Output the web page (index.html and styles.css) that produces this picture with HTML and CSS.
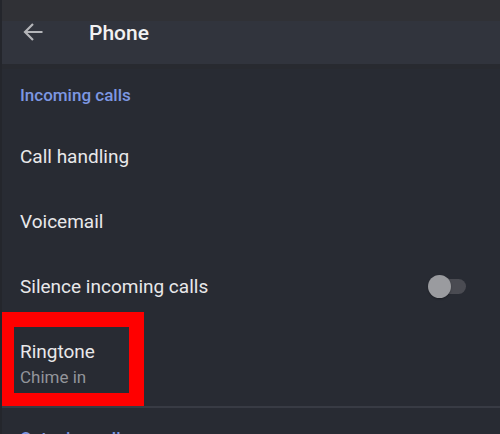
FILE: index.html
```html
<!DOCTYPE html>
<html>
<head>
<meta charset="utf-8">
<link rel="stylesheet" href="styles.css">
</head>
<body>
<div class="screen">
  <header class="appbar">
    <svg class="back" width="20" height="20" viewBox="0 0 20 20"><path d="M19.5 10H2 M10 2 L2 10 L10 18" fill="none" stroke="#b4b5b9" stroke-width="2.2"/></svg>
    <span class="title">Phone</span>
  </header>
  <div class="shade"></div>
  <div class="section-title">Incoming calls</div>
  <div class="row"><span class="label">Call handling</span></div>
  <div class="row"><span class="label">Voicemail</span></div>
  <div class="row"><span class="label">Silence incoming calls</span><span class="toggle"><span class="thumb"></span></span></div>
  <div class="row two">
    <span class="label">Ringtone</span>
    <span class="sub">Chime in</span>
  </div>
  <div class="divider"></div>
  <div class="section-title lower">Outgoing calls</div>
  <div class="highlight"></div>
</div>
</body>
</html>
```
FILE: styles.css
```css
html, body {
  margin: 0;
  padding: 0;
  background: #282b33;
}
.screen {
  position: relative;
  width: 500px;
  height: 434px;
  overflow: hidden;
  background: #282b33;
  font-family: Roboto, "Noto Sans", sans-serif;
  border-left: 2px solid #24262c;
  box-sizing: border-box;
}
.appbar {
  height: 64px;
  display: flex;
  align-items: center;
  background: linear-gradient(#303136 0, #303136 21px, #31343d 21px, #31343d 64px);
  padding-left: 23px;
  margin-left: -2px;
}
.back {
  display: block;
  margin-top: -1px;
}
.title {
  margin-left: 46px;
  color: #f1f1f2;
  font-size: 21px;
  font-weight: 500;
  margin-top: 1px;
}
.shade {
  height: 5px;
  background: #282a30;
}
.section-title {
  padding: 16px 18px 19px;
  line-height: 20px;
  color: #7d97e2;
  font-size: 17px;
  font-weight: 500;
}
.section-title.lower {
  padding-top: 20px;
}
.row {
  height: 65px;
  display: flex;
  align-items: center;
  justify-content: space-between;
  padding: 0 34px 0 18px;
}
.label {
  color: #e8e8ea;
  font-size: 19px;
  line-height: 24px;
}
.row.two {
  height: 87px;
  box-sizing: border-box;
  flex-direction: column;
  align-items: flex-start;
  justify-content: flex-start;
  padding-top: 21px;
}
.sub {
  margin-top: 3px;
  color: #93959b;
  font-size: 17px;
  line-height: 20px;
}
.toggle {
  position: relative;
  width: 34px;
  height: 15px;
  border-radius: 8px;
  background: #4a4b52;
}
.thumb {
  position: absolute;
  left: -4px;
  top: -4px;
  width: 23px;
  height: 23px;
  border-radius: 50%;
  background: #9a9b9f;
  box-shadow: 0 1px 2px rgba(0,0,0,0.3);
}
.divider {
  height: 2px;
  background: #383b44;
}
.highlight {
  position: absolute;
  left: -2px;
  top: 312px;
  width: 144px;
  height: 94px;
  box-sizing: border-box;
  border-style: solid;
  border-color: #ff0000;
  border-width: 15px 15px 13px 14px;
}
```
